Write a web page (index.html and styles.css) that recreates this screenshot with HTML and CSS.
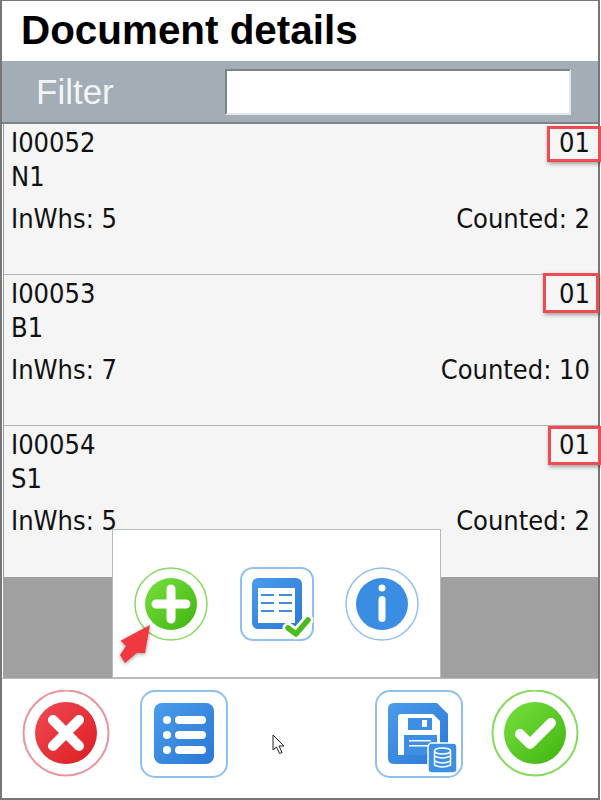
FILE: index.html
```html
<!DOCTYPE html>
<html>
<head>
  <meta charset="UTF-8">
  <title>Document details</title>
  <link rel="stylesheet" href="styles.css">
</head>
<body>
  <div class="frame">
    <svg class="defs" width="0" height="0">
      <defs>
        <linearGradient id="green" x1="0" y1="0" x2="1" y2="1">
          <stop offset="0" stop-color="#78e040"/>
          <stop offset="1" stop-color="#3fb40e"/>
        </linearGradient>
        <linearGradient id="red" x1="0" y1="0" x2="1" y2="1">
          <stop offset="0" stop-color="#f14a55"/>
          <stop offset="1" stop-color="#dc1c20"/>
        </linearGradient>
        <linearGradient id="blue" x1="0" y1="0" x2="1" y2="1">
          <stop offset="0" stop-color="#4a9cea"/>
          <stop offset="1" stop-color="#2a78d6"/>
        </linearGradient>
      </defs>
    </svg>

    <h1 class="title">Document details</h1>

    <div class="filter-bar">
      <label class="filter-label" for="filterInput">Filter</label>
      <input class="filter-input" type="text" id="filterInput">
    </div>

    <div class="list">
      <div class="row">
        <div class="row-line"><span>I00052</span><span>01</span></div>
        <div class="row-line"><span>N1</span></div>
        <div class="row-line row-counts"><span>InWhs: 5</span><span>Counted: 2</span></div>
        <div class="mark mark-first"></div>
      </div>
      <div class="row">
        <div class="row-line"><span>I00053</span><span>01</span></div>
        <div class="row-line"><span>B1</span></div>
        <div class="row-line row-counts"><span>InWhs: 7</span><span>Counted: 10</span></div>
        <div class="mark mark-second"></div>
      </div>
      <div class="row">
        <div class="row-line"><span>I00054</span><span>01</span></div>
        <div class="row-line"><span>S1</span></div>
        <div class="row-line row-counts"><span>InWhs: 5</span><span>Counted: 2</span></div>
        <div class="mark mark-third"></div>
      </div>
    </div>

    <div class="backdrop"></div>

    <div class="footer">
      <!-- cancel -->
      <svg class="icon-big" viewBox="0 0 88 88">
        <circle cx="44" cy="43" r="42.5" fill="#fff" stroke="#ea959b" stroke-width="2"/>
        <circle cx="44" cy="43" r="31" fill="url(#red)"/>
        <path d="M31 30 L57 56 M57 30 L31 56" stroke="#fff" stroke-width="10" stroke-linecap="round"/>
      </svg>
      <!-- list -->
      <svg class="icon-big" viewBox="0 0 88 88">
        <rect x="1" y="1" width="86" height="86" rx="14" fill="#fff" stroke="#8fc0f0" stroke-width="2"/>
        <rect x="14" y="13" width="60" height="61" rx="8" fill="url(#blue)"/>
        <g fill="#fff">
          <circle cx="27" cy="30" r="4"/>
          <circle cx="27" cy="45" r="4"/>
          <circle cx="27" cy="60" r="4"/>
          <rect x="35" y="26" width="31" height="8" rx="4"/>
          <rect x="35" y="41" width="31" height="8" rx="4"/>
          <rect x="35" y="56" width="31" height="8" rx="4"/>
        </g>
      </svg>
      <div class="footer-gap"></div>
      <!-- save to database -->
      <svg class="icon-big" viewBox="0 0 88 88">
        <rect x="1" y="1" width="86" height="86" rx="14" fill="#fff" stroke="#8fc0f0" stroke-width="2"/>
        <path d="M19 13 H62 L73 24 V68 Q73 74 67 74 H19 Q13 74 13 68 V19 Q13 13 19 13 Z" fill="url(#blue)"/>
        <path d="M26 24 H58 L65 31 V65 H23 V27 Q23 24 26 24 Z" fill="#fff"/>
        <rect x="33" y="28" width="24" height="12" fill="#3d8fe4"/>
        <rect x="47" y="30" width="5" height="7" fill="#fff"/>
        <rect x="29" y="45" width="33" height="20" fill="#3d8fe4"/>
        <rect x="34" y="50" width="22" height="1.5" fill="#fff"/>
        <rect x="34" y="55" width="22" height="1.5" fill="#fff"/>
        <rect x="53" y="53" width="29" height="30" rx="4" fill="#3d8fe4" stroke="#fff" stroke-width="1.5"/>
        <g fill="none" stroke="#fff" stroke-width="1.5">
          <ellipse cx="67.500" cy="61" rx="8" ry="3"/>
          <path d="M59.500 61 V75 Q67.500 79 75.500 75 V61 M59.500 66 Q67.500 70 75.500 66 M59.500 71 Q67.500 75 75.500 71"/>
        </g>
      </svg>
      <!-- confirm -->
      <svg class="icon-big icon-end" viewBox="0 0 88 88">
        <circle cx="44" cy="43" r="42.5" fill="#fff" stroke="#86db5e" stroke-width="2"/>
        <circle cx="44" cy="43" r="31" fill="url(#green)"/>
        <path d="M29 44 L39 54 L60 33" fill="none" stroke="#fff" stroke-width="10" stroke-linecap="round" stroke-linejoin="round"/>
      </svg>
    </div>

    <!-- popup menu over the list -->
    <div class="popup">
      <svg class="icon-small" viewBox="0 0 74 74">
        <circle cx="37" cy="37" r="36" fill="#fff" stroke="#86db5e" stroke-width="1.500"/>
        <circle cx="37" cy="37" r="26" fill="url(#green)"/>
        <path d="M37 22 V52 M22 37 H52" stroke="#fff" stroke-width="9" stroke-linecap="round"/>
      </svg>
      <svg class="icon-small" viewBox="0 0 74 74">
        <rect x="1" y="1" width="72" height="72" rx="12" fill="#fff" stroke="#8fc0f0" stroke-width="2"/>
        <rect x="12" y="11" width="50" height="51" rx="6" fill="url(#blue)"/>
        <rect x="18" y="21" width="37" height="35" fill="#fff"/>
        <g stroke="#3d8fe4" stroke-width="2">
          <path d="M21 28 H34 M39 28 H52 M21 36 H34 M39 36 H52 M21 44 H34 M39 44 H52"/>
        </g>
        <path d="M48 61 L56 67 L68 53" fill="none" stroke="#fff" stroke-width="11" stroke-linecap="round" stroke-linejoin="round"/>
        <path d="M48 61 L56 67 L68 53" fill="none" stroke="#4cbb1c" stroke-width="5.500" stroke-linecap="round" stroke-linejoin="round"/>
      </svg>
      <svg class="icon-small" viewBox="0 0 74 74">
        <circle cx="37" cy="37" r="36" fill="#fff" stroke="#8fc0f0" stroke-width="1.500"/>
        <circle cx="37" cy="37" r="26" fill="#3b8de3"/>
        <circle cx="37" cy="21" r="3.500" fill="#fff"/>
        <rect x="33.500" y="29" width="7" height="26" rx="3.500" fill="#fff"/>
      </svg>
    </div>

    <!-- tutorial arrow and mouse cursor -->
    <svg class="arrow" viewBox="0 0 36 44">
      <path d="M32 3 L2.700 18.700 L8 24 L2 33 L7 41 L19 30.700 L27 31.300 Z" fill="#f0383f"/>
    </svg>
    <svg class="cursor" viewBox="0 0 14 22">
      <path d="M1 1 V16 L4.500 13 L7.500 19.500 L10 18.500 L7 12 H12 Z" fill="#fff" stroke="#222" stroke-width="1"/>
    </svg>
  </div>
</body>
</html>
```

FILE: styles.css
```css
body {
  margin: 0;
  background-color: #fff;
  font-family: "DejaVu Sans Condensed", "DejaVu Sans", sans-serif;
  color: #111;
}
.frame {
  position: relative;
  width: 600px;
  height: 800px;
  box-sizing: border-box;
  border-top: 1px solid #777;
  border-left: 2px solid #777;
  border-right: 2px solid #777;
  border-bottom: 2px solid #777;
  display: flex;
  flex-direction: column;
  background-color: #fff;
}
.defs {
  position: absolute;
}
.title {
  margin: 0;
  height: 60px;
  padding-left: 19px;
  font-family: "Liberation Sans", Arial, sans-serif;
  font-size: 40.4px;
  font-weight: bold;
  line-height: 58px;
  color: #000;
}
.filter-bar {
  height: 63px;
  box-sizing: border-box;
  border-bottom: 2px solid #7d8488;
  background-color: #a2adb5;
  display: flex;
  align-items: center;
  padding-left: 34px;
}
.filter-label {
  width: 189px;
  font-family: "Liberation Sans", Arial, sans-serif;
  font-size: 35px;
  color: #f2f4f5;
}
.filter-input {
  width: 346px;
  height: 46px;
  box-sizing: border-box;
  border: 2px solid #e4e7e9;
  border-top-color: #7d8488;
  border-left-color: #7d8488;
  background-color: #fff;
  margin-top: 1px;
  padding: 0;
}
.list {
  margin-left: 1px;
  border-left: 1px solid #999;
}
.row {
  position: relative;
  height: 151px;
  box-sizing: border-box;
  padding: 2px 8px 0 7px;
  background-color: #f5f5f5;
  border-bottom: 1px solid #b4b4b4;
  font-size: 27px;
}
.row:last-child {
  border-bottom: none;
}
.row-line {
  display: flex;
  justify-content: space-between;
  line-height: 34px;
}
.row-counts {
  margin-top: 8px;
}
.mark {
  position: absolute;
  box-sizing: border-box;
  border: 3px solid #ef4b50;
  box-shadow: 1px 2px 4px rgba(0, 0, 0, 0.35);
}
.mark-first {
  top: 2px;
  left: 543px;
  width: 54px;
  height: 36px;
}
.mark-second {
  top: -2px;
  left: 539px;
  width: 56px;
  height: 40px;
}
.mark-third {
  top: 0;
  left: 544px;
  width: 53px;
  height: 39px;
}
.backdrop {
  flex: 1;
  margin-left: 1px;
  background-color: #a0a0a0;
}
.footer {
  height: 120px;
  box-sizing: border-box;
  border-top: 1px solid #bbb;
  display: flex;
  align-items: flex-start;
  gap: 30px;
  padding: 11px 19px 0 20px;
}
.footer-gap {
  flex: 1;
}
.icon-big {
  width: 88px;
  height: 88px;
  flex-shrink: 0;
}
.icon-end {
  margin-left: -2px;
}
.popup {
  position: absolute;
  top: 528px;
  left: 110px;
  width: 329px;
  height: 149px;
  box-sizing: border-box;
  border: 1px solid #b5b8c5;
  background-color: #fff;
  display: flex;
  align-items: center;
  gap: 32px;
  padding: 0 0 0 21px;
}
.icon-small {
  width: 74px;
  height: 74px;
  flex-shrink: 0;
}
.icon-small:last-child {
  margin-left: -1px;
}
.arrow {
  position: absolute;
  top: 621px;
  left: 116px;
  width: 36px;
  height: 44px;
  filter: drop-shadow(0 1px 2px rgba(0, 0, 0, 0.4));
}
.cursor {
  position: absolute;
  top: 733px;
  left: 270px;
  width: 14px;
  height: 22px;
}
```
